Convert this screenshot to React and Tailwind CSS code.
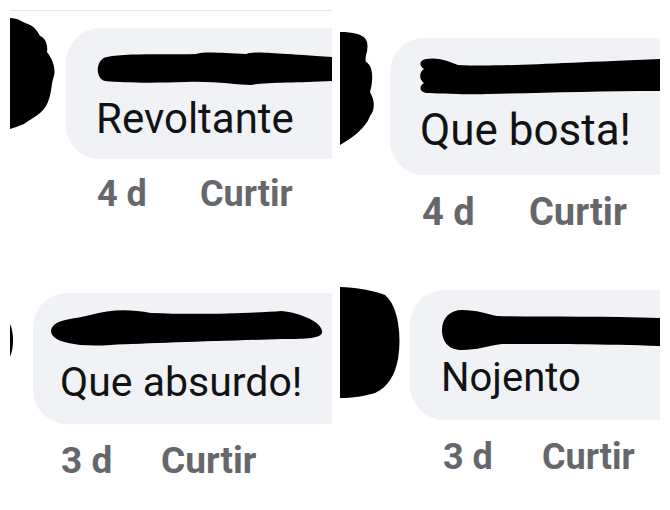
import React from "react";

// borrões pretos (avatar e nome riscados)
function Blob({ d, vb, className }) {
  return (
    <svg viewBox={vb} preserveAspectRatio="none" className={className}>
      <path d={d} fill="#000" />
    </svg>
  );
}

function Comment({ c }) {
  return (
    <div className="flex overflow-hidden h-full">
      <Blob d={c.avatarPath} vb={c.avatarVb} className={`shrink-0 ${c.avatar}`} />
      <div className={`flex-1 min-w-0 flex flex-col ${c.col}`}>
        <div className={`bg-[#f0f2f5] rounded-l-[34px] flex flex-col ${c.bubble}`}>
          <Blob d={c.namePath} vb={c.nameVb} className={c.name} />
          <p className={`leading-none text-[#111214] whitespace-nowrap ${c.text}`}>{c.msg}</p>
        </div>
        <div className={`flex leading-none font-bold text-[#65676b] ${c.meta}`}>
          <span className={c.timeW}>{c.time}</span>
          <span>Curtir</span>
        </div>
      </div>
    </div>
  );
}

const comments = [
  {
    msg: "Revoltante",
    time: "4 d",
    avatar: "w-[45px] h-[111px] mt-[7px]",
    avatarVb: "0 0 45 111",
    avatarPath:
      "M0 0 C8 0 12 4 18 6 C24 8 28 14 30 18 C36 20 38 28 37 34 C42 40 46 50 44 58 C41 66 42 74 38 84 C33 96 22 100 14 106 C8 108 4 110 0 111 Z",
    col: "ml-[11px]",
    bubble: "mt-[17px] h-[131px] pl-[29px]",
    nameVb: "0 0 235 34",
    namePath:
      "M12 6 C30 2 70 4 100 3 C110 0 125 2 150 3 C158 0 170 2 235 6 L235 30 C200 32 170 31 155 34 C140 34 120 30 90 31 C60 32 30 32 10 30 C0 28 0 8 12 6 Z",
    name: "mt-[23px] h-[34px] w-full",
    text: "text-[42px] mt-[13px] pl-[1px]",
    meta: "text-[36px] mt-[17px] pl-[31px]",
    timeW: "w-[103px]",
  },
  {
    msg: "Que bosta!",
    time: "4 d",
    avatar: "w-[35px] h-[113px] mt-[32px]",
    avatarVb: "0 0 35 113",
    avatarPath:
      "M0 0 C12 0 25 2 27 10 C29 20 24 24 26 30 C34 34 33 50 30 60 C36 70 34 80 30 84 C26 96 12 106 0 113 Z",
    col: "ml-[15px]",
    bubble: "mt-[38px] h-[137px] pl-[28px]",
    nameVb: "0 0 242 38",
    namePath:
      "M8 2 C20 0 30 4 40 8 C80 10 140 6 242 2 L242 34 C180 34 120 36 70 37 C40 38 20 36 8 36 C0 34 2 28 6 26 C0 22 2 14 6 12 C0 8 2 3 8 2 Z",
    name: "mt-[19px] h-[38px] w-full",
    text: "text-[44px] mt-[13px] pl-[2px]",
    meta: "text-[38px] mt-[18px] pl-[32px]",
    timeW: "w-[107px]",
  },
  {
    msg: "Que absurdo!",
    time: "3 d",
    avatar: "w-[5px] h-[40px] mt-[58px] -ml-[2px]",
    avatarVb: "0 0 5 40",
    avatarPath: "M0 0 C4 6 5 14 5 20 C5 28 4 34 0 40 Z",
    col: "ml-[20px]",
    bubble: "mt-[31px] h-[131px] pl-[17px] pr-[8px]",
    nameVb: "0 0 272 42",
    namePath:
      "M4 18 C10 12 25 12 40 8 C60 2 80 2 100 6 C150 8 200 6 230 4 C250 6 272 16 270 26 C268 32 250 32 230 32 C170 34 100 36 60 38 C30 40 10 36 4 30 C0 26 0 22 4 18 Z",
    name: "mt-[14px] h-[42px] w-full",
    text: "text-[41px] mt-[13px] pl-[10px]",
    meta: "text-[37px] mt-[18px] pl-[28px]",
    timeW: "w-[100px]",
  },
  {
    msg: "Nojento",
    time: "3 d",
    avatar: "w-[60px] h-[111px] mt-[25px]",
    avatarVb: "0 0 60 111",
    avatarPath:
      "M0 0 C15 0 35 4 45 8 C52 14 56 24 58 36 C60 48 60 60 58 72 C55 88 48 100 35 106 C25 109 12 111 0 111 Z",
    col: "ml-[10px]",
    bubble: "mt-[28px] h-[130px] pl-[32px]",
    nameVb: "0 0 218 40",
    namePath:
      "M20 0 C35 0 45 4 55 6 C100 7 160 6 218 8 L218 36 C160 34 100 34 60 34 C45 36 35 40 20 40 C5 40 0 30 0 20 C0 8 8 0 20 0 Z",
    name: "mt-[20px] h-[40px] w-full",
    text: "text-[40px] mt-[8px] -ml-[1px]",
    meta: "text-[36px] mt-[19px] pl-[33px]",
    timeW: "w-[99px]",
  },
];

export default function App() {
  return (
    <div className="w-[670px] h-[510px] bg-white overflow-hidden font-['Roboto','Liberation_Sans',sans-serif] grid grid-cols-[322px_320px] grid-rows-[255px_248px] gap-x-[8px] gap-y-[7px] pl-[10px]">
      <div className="flex flex-col overflow-hidden">
        <div className="h-px bg-[#e4e6e9] mt-[10px] shrink-0" />
        <div className="flex-1 min-h-0">
          <Comment c={comments[0]} />
        </div>
      </div>
      <Comment c={comments[1]} />
      <Comment c={comments[2]} />
      <Comment c={comments[3]} />
    </div>
  );
}
